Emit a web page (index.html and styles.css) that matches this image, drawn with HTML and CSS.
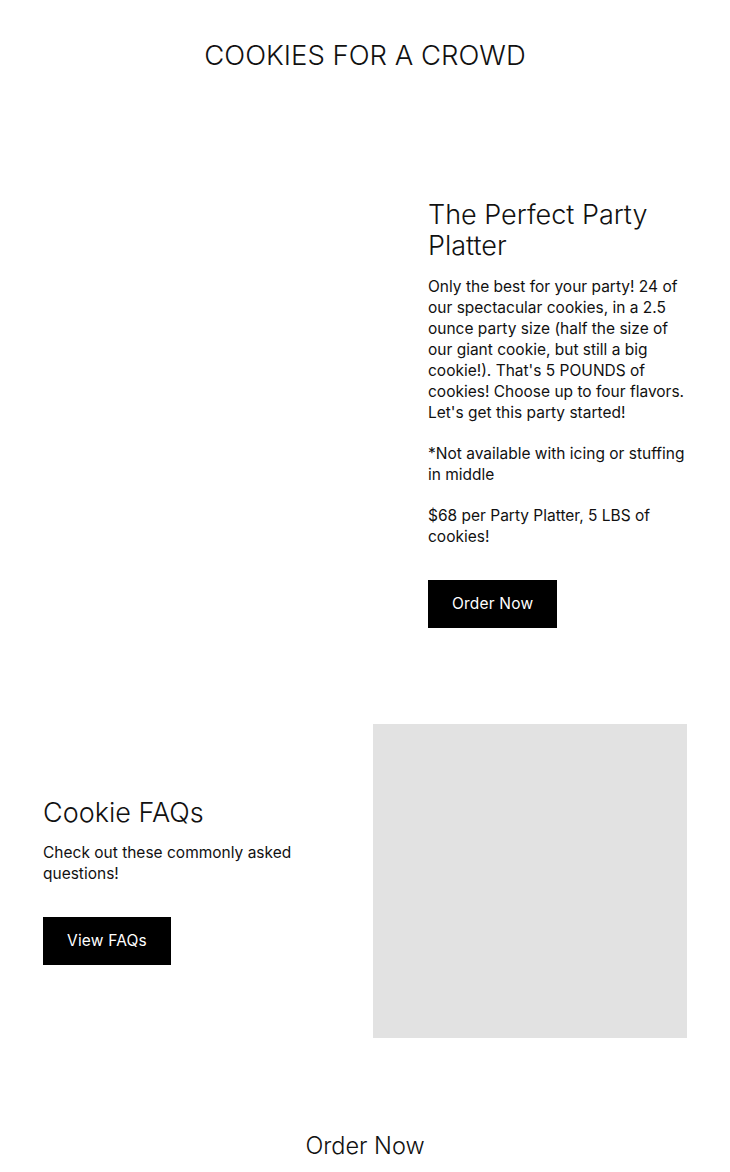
FILE: index.html
```html
<!DOCTYPE html>
<html lang="en">
<head>
<meta charset="utf-8">
<title>Cookies for a Crowd</title>
<link rel="stylesheet" href="styles.css">
</head>
<body>
<header class="page-head">
  <h1 class="page-title">COOKIES FOR A CROWD</h1>
</header>

<section class="feature feature-one">
  <div class="feature-media feature-media-blank"></div>
  <div class="feature-text">
    <h2 class="feature-title">The Perfect Party Platter</h2>
    <p class="feature-copy">Only the best for your party! 24 of our spectacular cookies, in a 2.5 ounce party size (half the size of our giant cookie, but still a big cookie!). That's 5 POUNDS of cookies! Choose up to four flavors. Let's get this party started!</p>
    <p class="feature-copy">*Not available with icing or stuffing in middle</p>
    <p class="feature-copy">$68 per Party Platter, 5 LBS of cookies!</p>
    <a class="btn" href="#">Order Now</a>
  </div>
</section>

<section class="feature feature-two">
  <div class="feature-text">
    <h2 class="feature-title">Cookie FAQs</h2>
    <p class="feature-copy">Check out these commonly asked questions!</p>
    <a class="btn btn-faq" href="#">View FAQs</a>
  </div>
  <div class="feature-media feature-media-grey"></div>
</section>

<footer class="page-foot">
  <a class="foot-link" href="#">Order Now</a>
</footer>
</body>
</html>
```

FILE: styles.css
```css
* { box-sizing: border-box; }

body {
  margin: 0;
  background: #fff;
  color: #111;
  font-family: "Inter", "Liberation Sans", sans-serif;
}

.page-head {
  padding-top: 38px;
  text-align: center;
}

.page-title {
  margin: 0;
  font-size: 27.5px;
  line-height: 34px;
  font-weight: 300;
}

.feature {
  display: grid;
  align-items: center;
  column-gap: 43px;
  padding: 0 43px;
}

.feature-one {
  grid-template-columns: 342px 259px;
  margin-top: 127px;
}

.feature-two {
  grid-template-columns: 287px 314px;
  margin-top: 96px;
}

.feature-media-grey {
  width: 314px;
  height: 314px;
  background: #e2e2e2;
}

.feature-title {
  margin: 0 0 15px;
  font-size: 27px;
  line-height: 31px;
  font-weight: 300;
}

.feature-two .feature-title {
  margin-bottom: 14px;
}

.feature-copy {
  margin: 0 0 20px;
  font-size: 15.5px;
  line-height: 21px;
}

.feature-copy:last-of-type {
  margin-bottom: 33px;
}

.btn {
  display: inline-block;
  background: #000;
  color: #fff;
  text-decoration: none;
  font-size: 15.5px;
  line-height: 48px;
  padding: 0 24px;
  letter-spacing: 0.2px;
}

.page-foot {
  margin-top: 93px;
  text-align: center;
}

.foot-link {
  display: inline-block;
  color: #111;
  text-decoration: none;
  font-size: 23.5px;
  line-height: 30px;
  font-weight: 300;
}
```
